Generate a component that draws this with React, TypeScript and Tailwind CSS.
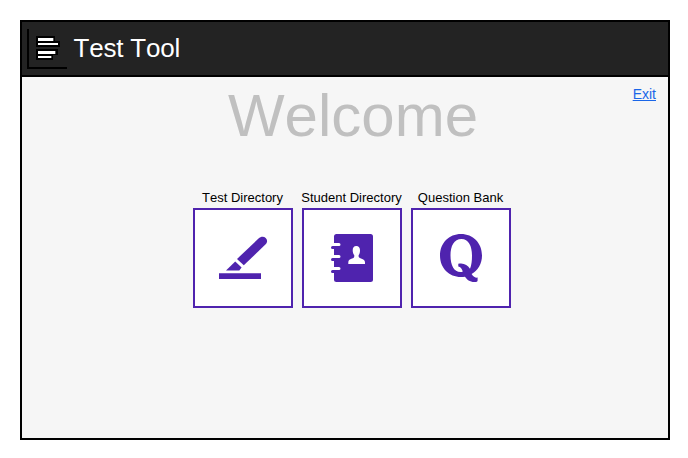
import type { ReactNode } from "react";

function MenuLogo() {
  return (
    <svg className="mt-[7px]" width="40" height="40" viewBox="0 0 40 40" shapeRendering="crispEdges">
      <path d="M0 0h2v38h38v2H0z" fill="#000" />
      <path d="M9 7h19v5h5v6H9zM9 20h22v6h-5v5H9z" fill="#000" />
      <path d="M11 9h15v3H11zM11 14h20v2H11zM11 22h17v3H11zM11 27h13v2H11z" fill="#fff" />
      <path d="M26 9h1v3h-1zM28 22h1v3h-1zM24 27h1v2h-1z" fill="#555" />
    </svg>
  );
}

function PenIcon() {
  return (
    <svg className="ml-0.5" width="50" height="48" viewBox="0 0 50 48" fill="#4f23ae">
      <path d="M0 39.3h42v5.7H0z" />
      <path d="M7 36.5L16.2 27.5L22.6 33.6L20.3 36.5z" />
      <path d="M18 25L39.5 4.5C41.8 2.4 44.8 2.2 46.7 4C48.6 5.9 48.6 8.4 46.4 10.6L24.8 31.3z" />
    </svg>
  );
}

function AddressBookIcon() {
  return (
    <svg width="42" height="48" viewBox="0 0 42 48" fill="#4f23ae">
      <rect x="3" y="0" width="39" height="48" rx="2.5" />
      <path d="M2 9h6a1.5 1.5 0 0 1 0 3H2zM2 21h6a1.5 1.5 0 0 1 0 3H2zM2 33h6a1.5 1.5 0 0 1 0 3H2z" fill="#fff" />
      <path d="M1.5 12H6v3H1.5a1.5 1.5 0 0 1 0-3zM1.5 24H6v3H1.5a1.5 1.5 0 0 1 0-3zM1.5 36H6v3H1.5a1.5 1.5 0 0 1 0-3z" />
      <path
        d="M25.3 12C22.8 12 21.7 13.7 21.7 16.2C21.7 18.4 22.3 20 23.2 21C23.6 23.3 22.8 24 21 24.6C18.4 25.4 17.3 26.3 17.3 28.5V30H34V28.5C34 26.3 32.7 25.4 30 24.6C28 24 27.3 23.3 27.7 21C28.6 20 29 18.4 29 16.2C29 13.7 27.8 12 25.3 12Z"
        fill="#fff"
      />
    </svg>
  );
}

function QuestionIcon() {
  return (
    <svg width="42" height="48" viewBox="0 0 42 48" fill="#4f23ae">
      <path
        fillRule="evenodd"
        d="M21 0C33 0 42 9 42 21.5C42 29.5 38 36.5 31.6 40C33.5 43 35.2 43.8 37.6 43.6V46.5C37.6 47.6 36.5 48 34.5 48C29.5 48 27 45.5 25 42.7C23.8 43 22.4 43 21 43C9 43 0 34 0 21.5C0 9 9 0 21 0ZM21.5 5C14 5 10.5 12 10.5 21.5C10.5 31.5 14 38 20.5 38C21.3 38 22.1 37.8 22.8 37.4C21.8 34.5 20.5 33 18.3 32.6V29.8C24 28.7 27.3 31 30 34.8C31.5 31.2 32 27 32 21.5C32 12 28.5 5 21.5 5Z"
      />
    </svg>
  );
}

function Tile({ label, children }: { label: string; children: ReactNode }) {
  return (
    <a className="flex w-[100px] flex-col items-center">
      <span className="mr-px h-[18px] text-[13px] leading-[16px] whitespace-nowrap text-black">{label}</span>
      <span className="flex h-[100px] w-[100px] items-center justify-center border-2 border-[#4f23ae] bg-white">
        {children}
      </span>
    </a>
  );
}

export default function App() {
  return (
    <div className="h-[458px] w-[688px] bg-white p-5 font-['Liberation_Sans',Arial,sans-serif] [font-kerning:none]">
      <div className="flex h-[420px] w-[650px] flex-col border-2 border-black bg-[#f6f6f6]">
        <header className="flex h-[55px] shrink-0 items-start border-b-2 border-black bg-[#232323] pl-[5px]">
          <MenuLogo />
          <h1 className="mt-[11px] ml-[6.5px] text-[26px] leading-[30px] tracking-[-0.2px] text-white">Test Tool</h1>
        </header>
        <main className="grid grid-cols-[1fr_auto_1fr] pt-1">
          <h2 className="col-start-2 ml-4 text-[60px] leading-[69px] text-[#c0c0c0]">Welcome</h2>
          <a className="mt-[5px] mr-3 justify-self-end text-[14px] leading-[16px] text-[#1a66e8] underline">Exit</a>
          <nav className="col-span-3 mt-10 ml-[14px] flex justify-center gap-[9px]">
            <Tile label="Test Directory"><PenIcon /></Tile>
            <Tile label="Student Directory"><AddressBookIcon /></Tile>
            <Tile label="Question Bank"><QuestionIcon /></Tile>
          </nav>
        </main>
      </div>
    </div>
  );
}
